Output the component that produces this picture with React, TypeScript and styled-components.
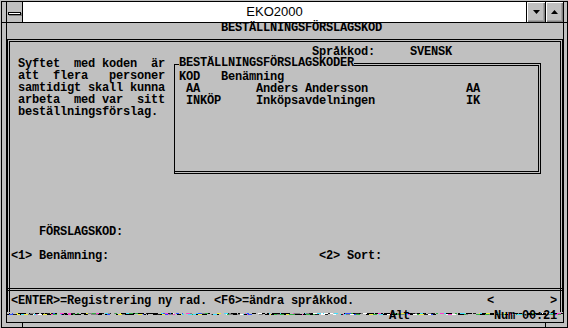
import styled, { createGlobalStyle } from 'styled-components'

const GlobalStyle = createGlobalStyle`
  html, body {
    margin: 0;
    padding: 0;
    background: #c0c0c0;
  }
  body {
    width: 568px;
    height: 328px;
    overflow: hidden;
  }
`

// garbled bottom line of the DOS box, built once from a fixed seed
const NOISE_COLORS = [
  '#000', '#000', '#000', '#000', '#000', '#202020',
  '#c0c0c0', '#c0c0c0', '#c0c0c0', '#fff',
  '#ff40d0', '#40e0ff', '#f0f040', '#30b040', '#3050ff', '#808080',
]
const makeNoise = (start: number) => {
  let seed = start
  const rnd = () => {
    seed = (seed * 9301 + 49297) % 233280
    return seed / 233280
  }
  const stops: string[] = []
  let x = 0
  while (x < 556) {
    const w = 1 + Math.floor(rnd() * 4)
    const c = NOISE_COLORS[Math.floor(rnd() * NOISE_COLORS.length)]
    stops.push(`${c} ${x}px ${x + w}px`)
    x += w
  }
  return `linear-gradient(90deg, ${stops.join(', ')})`
}
const NOISE_A = makeNoise(7)
const NOISE_B = makeNoise(131)

// ---- Window chrome ----
const Window = styled.div`
  box-sizing: border-box;
  width: 567px;
  height: 327px;
  margin: 1px 0 0 1px;
  border: 1px solid #000;
  background: #c0c0c0;
  display: flex;
  flex-direction: column;
`

const Upper = styled.div`
  display: flex;
  height: 321px;
`

const Rail = styled.div<{ $w: number }>`
  width: ${({ $w }) => $w}px;
`

const RailNotch = styled.div`
  height: 20px;
  border-bottom: 1px solid #000;
`

const Frame = styled.div`
  box-sizing: border-box;
  width: 558px;
  border: 1px solid #000;
  border-top: none;
  display: flex;
  flex-direction: column;
`

const BottomRail = styled.div`
  display: flex;
  height: 4px;
`

const RailSeg = styled.div<{ $w: number }>`
  width: ${({ $w }) => $w}px;
  border-right: 1px solid #000;
`

const TitleBar = styled.div`
  display: flex;
  flex: none;
  height: 20px;
  border-bottom: 1px solid #000;
`

const SysMenu = styled.div`
  width: 15px;
  border-right: 1px solid #000;
  display: flex;
  align-items: center;
  justify-content: center;
`

const SysBar = styled.div`
  width: 11px;
  height: 1px;
  background: #fff;
  border: 1px solid #000;
  box-shadow: 1px 1px 0 #808080;
  margin: 2px 1px 0 0;
`

const Title = styled.div`
  flex: 1;
  background: #fff;
  font-family: 'Liberation Sans', Arial, sans-serif;
  font-size: 13px;
  line-height: 20px;
  text-align: center;
  color: #000;
`

const ArrowButton = styled.div<{ $w: number }>`
  width: ${({ $w }) => $w}px;
  box-sizing: border-box;
  border-left: 1px solid #000;
  background: #c0c0c0;
  box-shadow: inset 1px 1px 0 #fff, inset -1px -1px 0 #808080, inset -2px -2px 0 #a0a0a0;
  display: flex;
  align-items: center;
  justify-content: center;
`

// ---- DOS text screen (80 x 25 cells of 7 x 12 px) ----
const Screen = styled.div`
  flex: none;
  width: 559px;
  height: 300px;
  margin: -1px 0 0 -3px;
  font-family: 'Liberation Mono', 'DejaVu Sans Mono', monospace;
  font-weight: 700;
  font-size: 12px;
  letter-spacing: -0.2px;
  color: #000;
  display: flex;
  flex-direction: column;
`

const Line = styled.div<{ $h?: number }>`
  height: ${({ $h }) => $h ?? 12}px;
  line-height: 12px;
  white-space: pre;
`

const OuterBox = styled.div`
  box-sizing: border-box;
  margin: 5px 0 0 3px;
  width: 556px;
  height: 273px;
  border: 3px double #000;
  border-bottom: none;
  padding: 4px 0 0 1px;
  display: flex;
  flex-direction: column;
`

const Middle = styled.div`
  display: flex;
  height: 120px;
`

const Blurb = styled.div`
  width: 163px;
  white-space: pre;
  line-height: 12px;
`

const CodesBox = styled.div`
  width: 367px;
  display: flex;
  flex-direction: column;
`

const CodesHeader = styled.div`
  display: flex;
  height: 12px;
`

const CornerTick = styled.div`
  box-sizing: border-box;
  width: 5px;
  height: 6px;
  align-self: flex-end;
  border-left: 1px solid #000;
  border-top: 1px solid #000;
  margin-top: 1px;
`

const CodesTitle = styled.div`
  line-height: 11px;
  height: 12px;
  white-space: pre;
`

const HeaderRule = styled.div`
  box-sizing: border-box;
  flex: 1;
  height: 7px;
  align-self: flex-end;
  border-top: 3px double #000;
  border-right: 3px double #000;
`

const CodesFrame = styled.div`
  box-sizing: border-box;
  height: 104px;
  border-left: 1px solid #000;
  border-right: 3px double #000;
  border-bottom: 3px double #000;
  padding: 1px 0 0 4px;
  white-space: pre;
  line-height: 12px;
`

const Divider = styled.div`
  height: 3px;
  box-sizing: border-box;
  border-top: 1px solid #000;
  border-bottom: 1px solid #000;
  margin: 2px -3px 4px -4px;
`

const NoiseRow = styled.div`
  height: 10px;
  line-height: 10px;
  margin: -1px 0 0 3px;
  text-indent: -3px;
  white-space: pre;
  background:
    ${NOISE_A} 0 2px / 100% 1px no-repeat,
    ${NOISE_B} 0 3px / 100% 1px no-repeat;
`

const Tri = ({ up }: { up?: boolean }) => (
  <svg width="7" height="4" viewBox="0 0 7 4">
    <polygon points={up ? '3.5,0 7,4 0,4' : '0,0 7,0 3.5,4'} fill="#000" />
  </svg>
)

const pad = (n: number) => ' '.repeat(n)

const App = () => {
  return (
    <>
      <GlobalStyle />
      <Window>
        <Upper>
          <Rail $w={4}>
            <RailNotch />
          </Rail>
          <Frame>
            <TitleBar>
              <SysMenu>
                <SysBar />
              </SysMenu>
              <Title>EKO2000</Title>
              <ArrowButton $w={19}>
                <Tri />
              </ArrowButton>
              <ArrowButton $w={18}>
                <Tri up />
              </ArrowButton>
            </TitleBar>
            <Screen>
              <Line>{pad(31)}BESTÄLLNINGSFÖRSLAGSKOD</Line>
              <OuterBox>
                <Line>{pad(43)}Språkkod:{pad(5)}SVENSK</Line>
                <Middle>
                  <Blurb>
                    {` Syftet  med koden  är
 att  flera   personer
 samtidigt skall kunna
 arbeta  med var  sitt
 beställningsförslag.`}
                  </Blurb>
                  <CodesBox>
                    <CodesHeader>
                      <CornerTick />
                      <CodesTitle>BESTÄLLNINGSFÖRSLAGSKODER</CodesTitle>
                      <HeaderRule />
                    </CodesHeader>
                    <CodesFrame>
                      {`KOD   Benämning
 AA        Anders Andersson              AA
 INKÖP     Inköpsavdelningen             IK`}
                    </CodesFrame>
                  </CodesBox>
                </Middle>
                <Line $h={48} />
                <Line>{pad(4)}FÖRSLAGSKOD:</Line>
                <Line />
                <Line>{`<1> Benämning:${pad(30)}<2> Sort:`}</Line>
                <Line $h={24} />
                <Line $h={9}>
                  <Divider />
                </Line>
                <Line>{`<ENTER>=Registrering ny rad. <F6>=ändra språkkod.${pad(19)}<${pad(8)}>`}</Line>
              </OuterBox>
              <NoiseRow>{`${pad(55)}Alt${pad(12)}Num 00:21`}</NoiseRow>
            </Screen>
          </Frame>
          <Rail $w={3}>
            <RailNotch />
          </Rail>
        </Upper>
        <BottomRail>
          <RailSeg $w={20} />
          <RailSeg $w={522} />
        </BottomRail>
      </Window>
    </>
  )
}

export default App
